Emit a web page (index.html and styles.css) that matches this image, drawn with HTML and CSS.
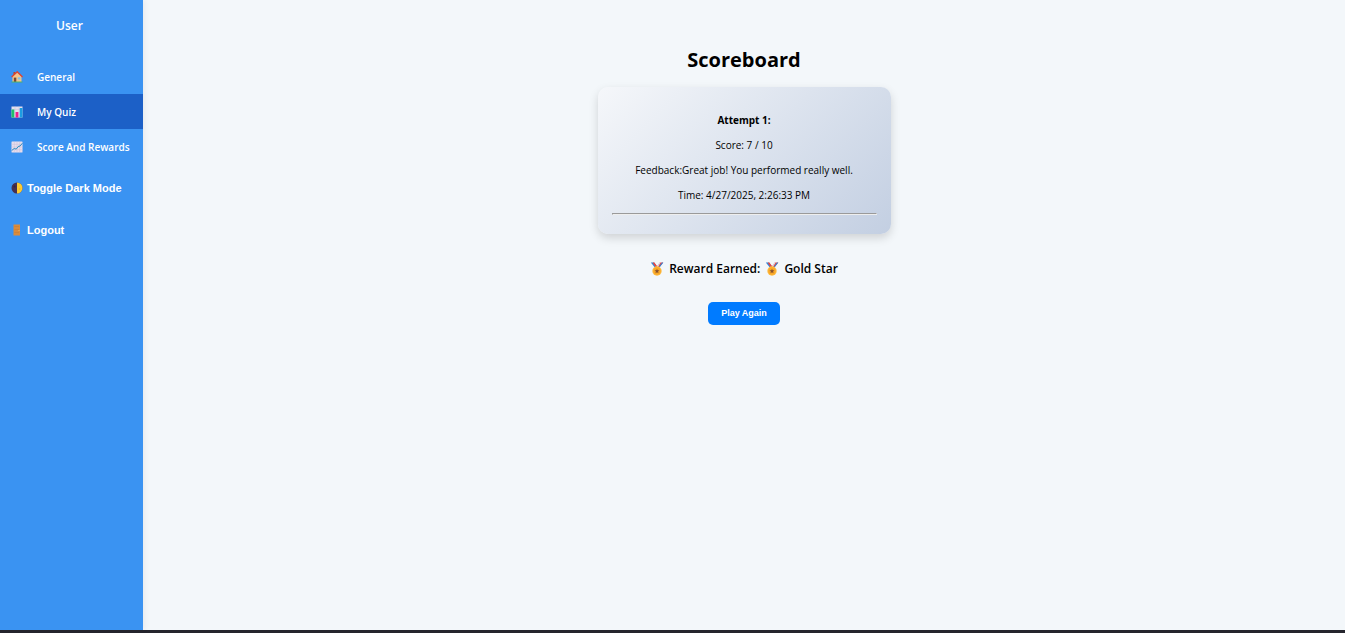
FILE: index.html
```html
<!DOCTYPE html>
<html lang="en">
<head>
<meta charset="utf-8">
<title>Scoreboard</title>
<link rel="stylesheet" href="styles.css">
</head>
<body>
<svg class="sprite" aria-hidden="true">
  <symbol id="medal" viewBox="0 0 14 14">
    <path d="M.8.500h3.400L7.800 5.500H4.800z" fill="#2f86d8"/>
    <path d="M2.600.500h1.800l3.200 4.500-1.800.5z" fill="#f0443e"/>
    <path d="M13.200.500H9.800L6.200 5.500h3z" fill="#f0443e"/>
    <path d="M10.600.500h-1L6.600 5l1 .5z" fill="#cfe6f7"/>
    <path d="M13.400.600h-1.500L8.700 5.200l.8.300z" fill="#2f86d8"/>
    <circle cx="7" cy="9" r="4.700" fill="#fdbd45"/>
    <circle cx="7" cy="9" r="3.700" fill="#faa928"/>
    <path d="M7 6.700l.7 1.500 1.700.1-1.300 1.200.4 1.700L7 10.300l-1.500.9.400-1.700-1.300-1.200 1.700-.1z" fill="#85502e"/>
  </symbol>
</svg>
<div class="app">
  <aside class="sidebar">
    <h2 class="user">User</h2>
    <nav class="nav">
      <a class="nav-link" href="#general">
        <svg class="icon" viewBox="0 0 12 12" aria-hidden="true">
          <path d="M2.500 1h1.700v3H2.500z" fill="#b7472a"/>
          <path d="M1.500 5.500L6.200 1.500l4.300 4V11h-9z" fill="#f5c58b"/>
          <path d="M.6 6L6.200.8 11.600 6" fill="none" stroke="#e2452f" stroke-width="1.400"/>
          <path d="M2.800 6.600h2.500V11H2.800z" fill="#7b4a35"/>
          <path d="M6.800 6.300h2.500v2.200H6.800z" fill="#7cc4ee"/>
          <path d="M.5 10.500h11v1H.5z" fill="#4ab26b"/>
        </svg>
        <span>General</span>
      </a>
      <a class="nav-link active" href="#quiz" aria-current="page">
        <svg class="icon" viewBox="0 0 12 12" aria-hidden="true">
          <rect x=".5" y=".5" width="11" height="11" fill="#e4dfee"/>
          <path d="M4 .5v11M8 .5v11M.5 3.500h11" stroke="#c9c2da" stroke-width=".5"/>
          <path d="M.5 3.500h2.800v8H.5z" fill="#1fc06b"/>
          <path d="M4.600 6h2.800v5.500H4.600z" fill="#ee1e8c"/>
          <path d="M8.700 2h2.800v9.500H8.700z" fill="#1b9de2"/>
        </svg>
        <span>My Quiz</span>
      </a>
      <a class="nav-link" href="#rewards">
        <svg class="icon" viewBox="0 0 12 12" aria-hidden="true">
          <rect x=".5" y=".5" width="11" height="11" rx=".5" fill="#e6deee"/>
          <path d="M3.300.5v11M6 .5v11M8.700.5v11M.5 3.300h11M.5 6h11M.5 8.700h11" stroke="#cbbdd6" stroke-width=".5"/>
          <path d="M.7 9.500l2.500-2 2 .6L7.800 5l1.200.2 2.400-3" fill="none" stroke="#2d8fc4" stroke-width="1"/>
        </svg>
        <span>Score And Rewards</span>
      </a>
    </nav>
    <button class="side-button" type="button">
      <svg class="icon" viewBox="0 0 12 12" aria-hidden="true">
        <circle cx="6" cy="6" r="5.500" fill="#45304f"/>
        <path d="M6 .5a5.500 5.500 0 010 11z" fill="#fccb32"/>
        <circle cx="3.500" cy="4.500" r="1" fill="#36243f"/>
        <circle cx="8.600" cy="7" r="1" fill="#f3b72a"/>
      </svg>
      <span>Toggle Dark Mode</span>
    </button>
    <button class="side-button" type="button">
      <svg class="icon" viewBox="0 0 12 12" aria-hidden="true">
        <rect x="2.500" y=".5" width="6.500" height="11" fill="#d98b3d"/>
        <path d="M3.500 2.500h4.500M3.500 5.500h4.500M3.500 8.500h4.500" stroke="#c97f35" stroke-width=".7"/>
        <circle cx="8" cy="6.500" r=".5" fill="#f7cf7a"/>
      </svg>
      <span>Logout</span>
    </button>
  </aside>
  <main class="content">
    <h1 class="title">Scoreboard</h1>
    <section class="card">
      <p><strong>Attempt 1:</strong></p>
      <p>Score: 7 / 10</p>
      <p>Feedback:Great job! You performed really well.</p>
      <p>Time: 4/27/2025, 2:26:33 PM</p>
      <hr>
    </section>
    <h3 class="reward">
      <svg class="medal" aria-hidden="true"><use href="#medal"/></svg>
      <span>Reward Earned:</span>
      <svg class="medal" aria-hidden="true"><use href="#medal"/></svg>
      <span>Gold Star</span>
    </h3>
    <button class="play" type="button">Play Again</button>
  </main>
</div>
</body>
</html>
```
FILE: styles.css
```css
* {
  box-sizing: border-box;
}

body {
  margin: 0;
  background: #f3f7fa;
  color: #000;
  font-family: "Open Sans", "Noto Sans", sans-serif;
  font-size: 10px;
}

.sprite {
  display: none;
}

.app {
  display: flex;
  min-height: 100vh;
  border-bottom: 3px solid #25252d;
}

.sidebar {
  display: flex;
  flex-direction: column;
  flex: 0 0 143px;
  background: #3a93f2;
  color: #fff;
  box-shadow: 2px 0 5px rgba(0, 0, 0, 0.05);
}

.user {
  margin: 0;
  padding: 18px 4px 25px 0;
  font-size: 12px;
  font-weight: 600;
  line-height: 16px;
  text-align: center;
}

.nav {
  display: flex;
  flex-direction: column;
  margin-bottom: 6px;
}

.nav-link {
  display: flex;
  align-items: center;
  gap: 15px;
  height: 35px;
  padding: 0 10px;
  color: #fff;
  font-size: 10px;
  font-weight: 600;
  text-decoration: none;
  white-space: nowrap;
}

.active {
  background: #1c60c7;
}

.icon {
  flex: none;
  width: 12px;
  height: 12px;
}

.side-button {
  display: flex;
  align-items: center;
  gap: 5px;
  height: 36px;
  margin-bottom: 6px;
  padding: 0 10px;
  border: 0;
  background: none;
  color: #fff;
  font-family: "Liberation Sans", Arial, sans-serif;
  font-size: 11px;
  font-weight: 700;
  white-space: nowrap;
}

.nav-link,
.side-button {
  padding-left: 11px;
}

.nav-link {
  gap: 14px;
}

.side-button {
  gap: 4px;
}

.content {
  display: flex;
  flex: 1;
  flex-direction: column;
  align-items: center;
  padding: 45px 14px 14px;
}

.title {
  margin: 0 0 12px;
  font-size: 20px;
  line-height: 30px;
}

.card {
  width: 293px;
  max-width: 100%;
  padding: 26px 14px 19px;
  border-radius: 10px;
  background: linear-gradient(135deg, #f5f7fa, #c3cfe2);
  box-shadow: 0 4px 10px rgba(0, 0, 0, 0.15);
  text-align: center;
}

.card p {
  margin: 0 0 10px;
  line-height: 15px;
}

.card hr {
  margin: 0;
}

.reward {
  display: flex;
  align-items: center;
  gap: 5px;
  margin: 27px 0 25px;
  font-size: 12px;
  font-weight: 600;
  line-height: 16px;
}

.medal {
  width: 14px;
  height: 14px;
}

.play {
  height: 23px;
  padding: 0 13px 2px;
  border: 0;
  border-radius: 5px;
  background: #007bff;
  color: #fff;
  font-family: "Liberation Sans", Arial, sans-serif;
  font-size: 9px;
  font-weight: 700;
}
```
